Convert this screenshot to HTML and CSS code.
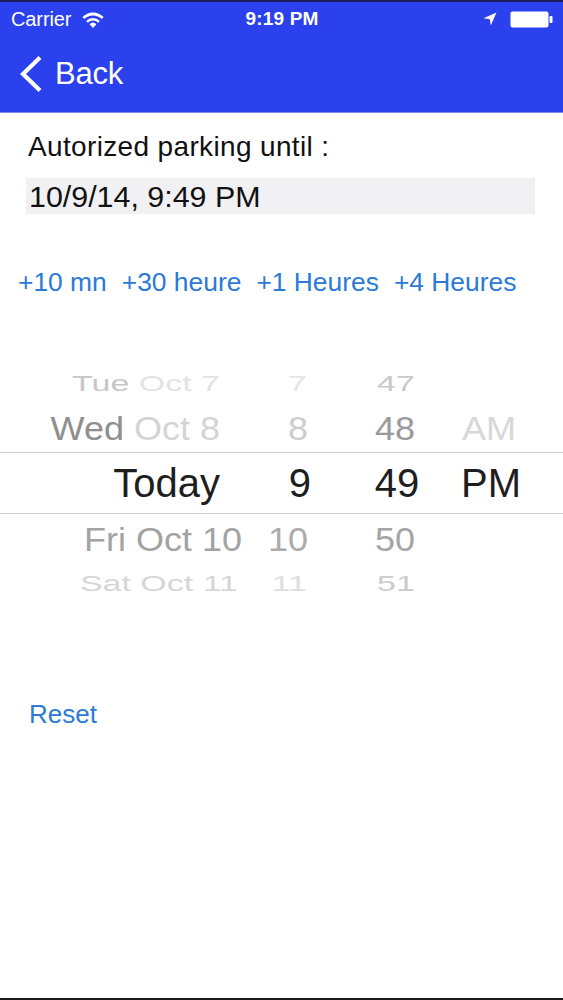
FILE: index.html
```html
<!DOCTYPE html>
<html>
<head>
<meta charset="utf-8">
<link rel="stylesheet" href="styles.css">
</head>
<body>
<div class="screen">
  <header class="header">
    <div class="statusbar">
      <div class="sb-left">
        <span class="carrier">Carrier</span>
        <svg class="wifi" width="24" height="18" viewBox="0 0 24 18">
          <path d="M12 17 L8.6 13.2 A5 5 0 0 1 15.4 13.2 Z" fill="#fff"/>
          <path d="M12 12.8 A7 7 0 0 0 6.9 15 L5.2 13.1 A9.4 9.4 0 0 1 18.8 13.1 L17.1 15 A7 7 0 0 0 12 12.8 Z" fill="#fff" transform="translate(0,-3.2)"/>
          <path d="M12 7 A12 12 0 0 0 3.3 10.7 L1.4 8.6 A14.6 14.6 0 0 1 22.6 8.6 L20.7 10.7 A12 12 0 0 0 12 7 Z" fill="#fff" transform="translate(0,-2.6)"/>
        </svg>
      </div>
      <span class="time">9:19 PM</span>
      <div class="sb-right">
        <svg class="loc" width="14" height="14" viewBox="0 0 14 14">
          <polygon points="13.5,0.5 0.5,6.2 6.8,7.2 7.8,13.5" fill="#fff"/>
        </svg>
        <svg class="battery" width="43" height="17" viewBox="0 0 43 17">
          <rect x="0.5" y="0.5" width="38" height="16" rx="2" fill="#fff"/>
          <rect x="39.5" y="5" width="3" height="7" rx="1" fill="#fff"/>
        </svg>
      </div>
    </div>
    <nav class="navbar">
      <svg class="chevron" width="26" height="38" viewBox="0 0 26 38">
        <polyline points="21,2.5 4,19 21,35.5" fill="none" stroke="#fff" stroke-width="4.2" stroke-linejoin="miter"/>
      </svg>
      <span class="back">Back</span>
    </nav>
  </header>

  <main class="content">
    <div class="label">Autorized parking until :</div>
    <div class="field">10/9/14, 9:49 PM</div>

    <div class="quick">
      <span class="qbtn">+10 mn</span>
      <span class="qbtn">+30 heure</span>
      <span class="qbtn">+1 Heures</span>
      <span class="qbtn">+4 Heures</span>
    </div>

    <div class="picker">
      <div class="prow r1">
        <span class="day"><span class="c-tue">Tue</span> <span class="c-oct7">Oct 7</span></span>
        <span class="hr c-h7">7</span>
        <span class="mn c-m47">47</span>
        <span class="ap"></span>
      </div>
      <div class="prow r2">
        <span class="day"><span class="c-wed">Wed</span> <span class="c-oct8">Oct 8</span></span>
        <span class="hr c-h8">8</span>
        <span class="mn c-m48">48</span>
        <span class="ap c-am">AM</span>
      </div>
      <div class="prow r3">
        <span class="day">Today</span>
        <span class="hr">9</span>
        <span class="mn">49</span>
        <span class="ap">PM</span>
      </div>
      <div class="prow r4">
        <span class="day shift-fri">Fri Oct 10</span>
        <span class="hr c-h10">10</span>
        <span class="mn c-m50">50</span>
        <span class="ap"></span>
      </div>
      <div class="prow r5">
        <span class="day shift-sat">Sat Oct 11</span>
        <span class="hr c-h11">11</span>
        <span class="mn c-m51">51</span>
        <span class="ap"></span>
      </div>
    </div>

    <div class="reset">Reset</div>
  </main>
</div>
</body>
</html>
```

FILE: styles.css
```css
* { box-sizing: border-box; }
html, body { margin: 0; padding: 0; }
body {
  font-family: "Liberation Sans", Arial, sans-serif;
  background: #fff;
}
.screen {
  width: 563px;
  height: 1000px;
  display: flex;
  flex-direction: column;
  border-top: 2px solid #1c2060;
  border-bottom: 2px solid #1a1a1a;
  background: #fff;
  overflow: hidden;
}
.header {
  background: #2b41ee;
  height: 111px;
  display: flex;
  flex-direction: column;
  border-bottom: 1px solid #7f8ce6;
}
.statusbar {
  height: 34px;
  display: flex;
  align-items: center;
  justify-content: space-between;
  padding: 0 10px 0 11px;
  color: #fff;
}
.sb-left { display: flex; align-items: center; gap: 10px; width: 160px; }
.carrier { font-size: 20px; letter-spacing: -0.1px; }
.wifi { margin-top: 1px; }
.time { font-size: 19px; font-weight: bold; letter-spacing: 0.2px; }
.sb-right { display: flex; align-items: center; gap: 13px; width: 160px; justify-content: flex-end; }
.navbar {
  flex: 1;
  display: flex;
  align-items: center;
  padding-left: 19px;
  gap: 10px;
  color: #fff;
}
.back { font-size: 31px; letter-spacing: -0.2px; }

.content {
  flex: 1;
  display: flex;
  flex-direction: column;
}
.label {
  margin: 17px 0 0 28px;
  font-size: 28px;
  line-height: 34px;
  color: #111;
  letter-spacing: 0.35px;
}
.field {
  margin: 14px 28px 0 26px;
  height: 36px;
  background: #f1f1f3;
  font-size: 30.4px;
  line-height: 36px;
  padding-left: 3px;
  color: #111;
}
.quick {
  margin: 52px 0 0 18px;
  display: flex;
  gap: 15px;
  height: 32px;
  align-items: center;
}
.qbtn {
  font-size: 26.4px;
  color: #2b7ad6;
  line-height: 32px;
}

.picker {
  margin-top: 63px;
  display: flex;
  flex-direction: column;
}
.prow {
  display: flex;
  align-items: center;
  white-space: nowrap;
}
.day { width: 220px; text-align: right; flex: none; }
.hr { width: 90px; text-align: right; flex: none; }
.mn { width: 80px; margin-left: 47px; text-align: center; flex: none; }
.ap { width: 80px; margin-left: 14px; text-align: center; flex: none; }

.r1 { height: 44px; font-size: 34px; transform: scaleY(0.63); }
.r2 { height: 47px; font-size: 36px; transform: scaleY(0.9); }
.r3 {
  height: 62px;
  font-size: 40px;
  color: #1e1e1e;
  border-top: 1px solid #d2d2d2;
  border-bottom: 1px solid #d2d2d2;
}
.r4 { height: 51px; font-size: 36px; color: #a3a3a3; transform: scaleY(0.9); }
.r5 { height: 36px; font-size: 34px; color: #d6d6d6; transform: scaleY(0.65); }

.r1 .hr, .r5 .hr { width: 87px; }
.r2 .hr { width: 88px; }
.r3 .hr { width: 91px; }
.r3 .mn { margin-left: 46px; }
.r4 .hr { width: 88px; }
.r1 .mn, .r5 .mn { margin-left: 49px; }

.shift-fri { transform: translateX(22px); }
.shift-sat { transform: translateX(18px); }

.c-tue { color: #c6c6c6; }
.c-oct7 { color: #e3e3e3; }
.c-h7 { color: #e6e6e6; }
.c-m47 { color: #c9c9c9; }
.c-wed { color: #8f8f8f; }
.c-oct8 { color: #d4d4d4; }
.c-h8 { color: #cdcdcd; }
.c-m48 { color: #9a9a9a; }
.c-am { color: #d8d8d8; }
.c-h10 { color: #ababab; }
.c-m50 { color: #a5a5a5; }
.c-h11 { color: #dedede; }
.c-m51 { color: #cccccc; }

.reset {
  margin: 97px 0 0 29px;
  font-size: 26px;
  line-height: 32px;
  color: #2b7ad6;
}
```
